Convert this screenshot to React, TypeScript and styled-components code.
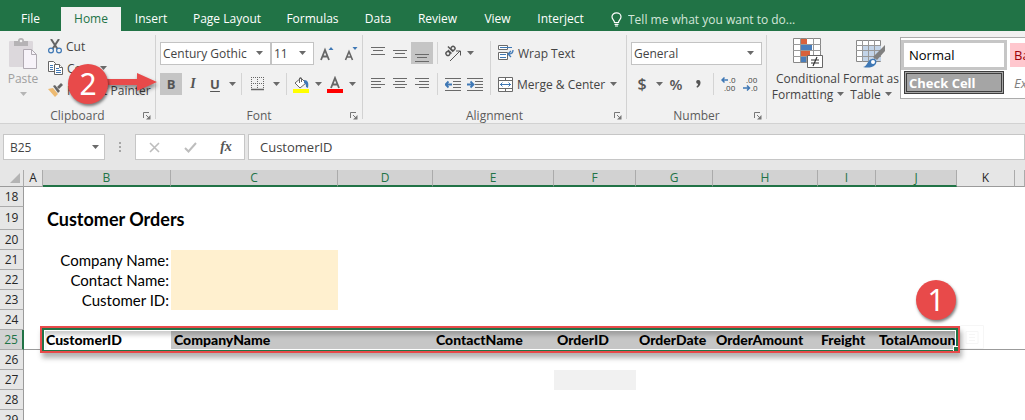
import React from "react";
import styled, { createGlobalStyle, css } from "styled-components";

const green = "#217346";
const ink = "#444444";
const iconGrey = "#6a6a6a";
const blue = "#3f78b5";
const red = "#e84a4a";

const GlobalStyle = createGlobalStyle`
  * { box-sizing: border-box; }
  body { margin: 0; background: #ffffff; }
  body, button, input, select { font-family: "Open Sans", "Noto Sans", sans-serif; font-size: 12px; color: ${ink}; }
  button { border: 0; padding: 0; background: none; white-space: nowrap; }
`;

const Page = styled.div`
  display: flex;
  flex-direction: column;
  height: 100vh;
  overflow: hidden;
`;

/* ---- tab strip ---- */

const TabStrip = styled.nav`
  display: flex;
  flex: none;
  height: 31px;
  padding-top: 7px;
  background: ${green};
`;

const Tab = styled.button<{ $width: number; $active?: boolean }>`
  flex: none;
  width: ${(p) => p.$width}px;
  height: 24px;
  line-height: 24px;
  color: ${(p) => (p.$active ? green : "#ffffff")};
  background: ${(p) => (p.$active ? "#f1f1f1" : "transparent")};
`;

const TellMe = styled.label`
  display: flex;
  align-items: center;
  gap: 6px;
  flex: 1;
  padding-left: 14px;
`;

const TellMeInput = styled.input`
  flex: 1;
  min-width: 0;
  border: 0;
  padding: 0;
  background: transparent;
  &::placeholder { color: #d3e6da; opacity: 1; }
`;

/* ---- ribbon ---- */

const Ribbon = styled.div`
  position: relative;
  display: flex;
  flex: none;
  height: 93px;
  padding-top: 4px;
  background: #f1f1f1;
  border-bottom: 1px solid #d2d2d2;
`;

const Group = styled.section<{ $width?: number }>`
  display: flex;
  flex-direction: column;
  flex: ${(p) => (p.$width ? "none" : "1")};
  width: ${(p) => (p.$width ? `${p.$width}px` : "auto")};
  min-width: 0;
  overflow: hidden;
`;

const GroupDivider = styled.div`
  flex: none;
  width: 1px;
  height: 84px;
  background: #d2d2d2;
`;

const GroupBody = styled.div`
  display: flex;
  height: 72px;
  padding-left: 4px;
`;

const GroupFooter = styled.div`
  display: grid;
  grid-template-columns: 16px 1fr 16px;
  align-items: center;
  height: 16px;
  line-height: 16px;
  text-align: center;
  color: #5c5c5c;
`;

const Rows = styled.div`
  display: flex;
  flex-direction: column;
  gap: 9px;
  padding-top: 7px;
`;

const Row = styled.div`
  display: flex;
  align-items: center;
  height: 22px;
`;

const Tool = styled.button<{ $pressed?: boolean; $width?: number }>`
  display: flex;
  align-items: center;
  justify-content: center;
  flex: none;
  width: ${(p) => p.$width ?? 22}px;
  height: 22px;
  background: ${(p) => (p.$pressed ? "#c5c5c5" : "transparent")};
`;

const Glyph = styled.span<{ $italic?: boolean; $underline?: boolean; $size?: number; $light?: boolean }>`
  color: #555555;
  font-size: ${(p) => p.$size ?? 13}px;
  font-weight: ${(p) => (p.$light ? 600 : 700)};
  font-style: ${(p) => (p.$italic ? "italic" : "normal")};
  font-family: ${(p) => (p.$italic ? '"Liberation Serif", serif' : "inherit")};
  text-decoration: ${(p) => (p.$underline ? "underline" : "none")};
  text-underline-offset: 2px;
`;

const Separator = styled.div<{ $tall?: boolean; $wide?: boolean }>`
  flex: none;
  width: 1px;
  height: ${(p) => (p.$tall ? 54 : 22)}px;
  margin: ${(p) => (p.$tall ? "6px 7px 0 4px" : p.$wide ? "0 4px" : "0 3px")};
  background: #d4d4d4;
`;

const LabelTool = styled.button`
  display: flex;
  align-items: center;
  gap: 4px;
  height: 22px;
`;

const Stack = styled.div`
  display: flex;
  flex-direction: column;
  align-items: flex-start;
  padding-left: 6px;
`;

const BigTool = styled.button<{ $width: number; $muted?: boolean }>`
  display: flex;
  flex-direction: column;
  align-items: center;
  flex: none;
  width: ${(p) => p.$width}px;
  padding-top: 3px;
  line-height: 16px;
  color: ${(p) => (p.$muted ? "#a0a0a0" : ink)};
  svg:first-child { margin-bottom: 2px; }
`;

const BigLine = styled.span`
  display: flex;
  align-items: center;
  justify-content: center;
  gap: 4px;
  height: 16px;
`;

const Combo = styled.div<{ $width: number }>`
  display: grid;
  grid-template-columns: 1fr 14px;
  align-items: center;
  flex: none;
  width: ${(p) => p.$width}px;
  height: 23px;
  background: #ffffff;
  border: 1px solid #c3c3c3;
  & > select { grid-area: 1 / 1 / 2 / 3; }
  & > svg { grid-area: 1 / 2; pointer-events: none; z-index: 1; }
`;

const ComboSelect = styled.select`
  appearance: none;
  width: 100%;
  height: 20px;
  padding: 0 0 0 2px;
  border: 0;
  background: transparent;
`;

const Gallery = styled.div`
  display: grid;
  grid-template-columns: 106px 106px;
  grid-template-rows: 30px 24px;
  gap: 1px;
  flex: 1;
  min-width: 0;
  height: 62px;
  margin: 2px 0 0 3px;
  padding-top: 2px;
  overflow: hidden;
  background: #ffffff;
  border: 1px solid #ababab;
  border-right: 0;
`;

const StyleCell = styled.button<{ $kind: "normal" | "bad" | "check" | "note" }>`
  padding-left: 5px;
  text-align: left;
  font-size: 13px;
  color: #000000;
  ${(p) => p.$kind === "normal" && css`border: 3px solid #c6c6c6; background: #ffffff;`}
  ${(p) => p.$kind === "bad" && css`margin: 3px 2px; padding-left: 4px; background: #ffc7ce; color: #9c0006;`}
  ${(p) => p.$kind === "check" && css`
    margin: 0 3px 1px;
    padding-left: 2px;
    border: 3px double #3f3f3f;
    background: #a5a5a5;
    color: #ffffff;
    font-weight: 700;
  `}
  ${(p) => p.$kind === "note" && css`margin: 0 2px; padding-left: 4px; color: #7f7f7f; font-style: italic;`}
`;

/* ---- formula bar ---- */

const FormulaBar = styled.div`
  display: flex;
  align-items: center;
  flex: none;
  height: 46px;
  padding-left: 3px;
  background: #e6e6e6;
`;

const BarBox = styled.div<{ $width?: number }>`
  display: flex;
  align-items: center;
  flex: ${(p) => (p.$width ? "none" : "1")};
  width: ${(p) => (p.$width ? `${p.$width}px` : "auto")};
  min-width: 0;
  height: 26px;
  margin-left: ${(p) => (p.$width ? 0 : 3)}px;
  background: #ffffff;
  border: 1px solid #c6c6c6;
`;

const BarInput = styled.input<{ $indent: number; $large?: boolean }>`
  flex: 1;
  min-width: 0;
  height: 22px;
  padding: 0 0 0 ${(p) => p.$indent}px;
  border: 0;
  background: transparent;
  font-size: ${(p) => (p.$large ? 13 : 12)}px;
`;

const BarTool = styled.button`
  display: flex;
  flex: 1;
  justify-content: center;
`;

const Grip = styled.div`
  display: flex;
  flex-direction: column;
  align-items: center;
  gap: 2px;
  width: 30px;
`;

const Dot = styled.i`
  width: 2px;
  height: 2px;
  background: #a6a6a6;
`;

/* ---- worksheet ---- */

const Sheet = styled.main`
  position: relative;
  flex: 1;
  min-height: 0;
  overflow: hidden;
  background: #ffffff;
`;

const Grid = styled.table`
  width: 100%;
  table-layout: fixed;
  border-collapse: separate;
  border-spacing: 0;
  color: #000000;
`;

const HeadRow = styled.tr`
  height: 17px;
`;

const ColHead = styled.th<{ $selected?: boolean }>`
  height: 17px;
  padding: 0;
  font-weight: 400;
  line-height: 14px;
  color: ${(p) => (p.$selected ? green : "#262626")};
  background: ${(p) => (p.$selected ? "#d2d2d2" : "#e6e6e6")};
  border-right: 1px solid #ababab;
  border-bottom: ${(p) => (p.$selected ? `2px solid ${green}` : "1px solid #9b9b9b")};
`;

const Corner = styled.th`
  height: 17px;
  padding: 0 3px 0 0;
  line-height: 0;
  text-align: right;
  background: #e6e6e6;
  border-right: 1px solid #ababab;
  border-bottom: 1px solid #9b9b9b;
`;

const SheetRow = styled.tr<{ $height: number }>`
  height: ${(p) => p.$height}px;
`;

const RowHead = styled.th<{ $selected?: boolean }>`
  padding: 0;
  font-weight: 400;
  line-height: 16px;
  color: ${(p) => (p.$selected ? green : "#262626")};
  background: ${(p) => (p.$selected ? "#d2d2d2" : "#e6e6e6")};
  border-right: ${(p) => (p.$selected ? `2px solid ${green}` : "1px solid #9b9b9b")};
  border-bottom: 1px solid #ababab;
`;

type CellKind = "plain" | "title" | "label" | "input" | "first" | "head" | "ruled" | "shade";

const Cell = styled.td<{ $kind: CellKind }>`
  padding: 0 2px 0 3px;
  overflow: ${(p) => (p.$kind === "title" ? "visible" : "hidden")};
  white-space: nowrap;
  line-height: 18px;
  font-family: Lato, sans-serif;
  font-size: 15px;
  ${(p) => p.$kind === "title" && css`font-size: 18px; font-weight: 700; padding-left: 4px;`}
  ${(p) => p.$kind === "label" && css`text-align: right;`}
  ${(p) => p.$kind === "input" && css`background: #fff0cf;`}
  ${(p) => p.$kind === "shade" && css`background: #f1f1f1;`}
  ${(p) => (p.$kind === "first" || p.$kind === "head") && css`font-weight: 900; font-size: 14px;`}
  ${(p) => p.$kind === "head" && css`background: #c6c6c6;`}
  ${(p) => (p.$kind === "first" || p.$kind === "head" || p.$kind === "ruled") && css`border-bottom: 1px solid #9b9b9b;`}
`;

/* ---- callouts lying over the window ---- */

const Highlight = styled.div`
  position: absolute;
  top: 156px;
  left: 40px;
  width: 920px;
  height: 27px;
  border: 2px solid ${red};
  box-shadow: 2px 5px 5px rgba(0, 0, 0, 0.3);
  pointer-events: none;
`;

const Selection = styled.div`
  height: 23px;
  border: 2px solid ${green};
  border-bottom-width: 1px;
  box-shadow: inset 0 0 0 1px #ffffff, inset 0 5px 4px rgba(0, 0, 0, 0.2);
`;

const FillHandle = styled.div`
  position: absolute;
  right: 0;
  bottom: 0;
  width: 5px;
  height: 5px;
  background: ${green};
  border: solid #ffffff;
  border-width: 1px 0 0 1px;
`;

const Badge = styled.div<{ $left: number; $top: number }>`
  position: absolute;
  left: ${(p) => p.$left}px;
  top: ${(p) => p.$top}px;
  width: 40px;
  height: 40px;
  border-radius: 50%;
  background: ${red};
  box-shadow: 1px 2px 3px rgba(0, 0, 0, 0.5);
  color: #ffffff;
  font-family: "Noto Sans", sans-serif;
  font-size: 30px;
  line-height: 40px;
  text-align: center;
`;

const ArrowLayer = styled.svg`
  position: absolute;
  left: 104px;
  top: 38px;
  filter: drop-shadow(1px 3px 2px rgba(0, 0, 0, 0.45));
  pointer-events: none;
`;

const QuickAnalysis = styled.svg`
  position: absolute;
  left: 960px;
  top: 155px;
`;

/* ---- icons ---- */

const Caret = ({ color = iconGrey }: { color?: string }) => (
  <svg width="7" height="4" viewBox="0 0 7 4"><path d="M0 0h7L3.5 4z" fill={color} /></svg>
);

const Launcher = () => (
  <svg width="8" height="8" viewBox="0 0 8 8" fill="none" stroke="#777">
    <path d="M.5 6V.5H6M3 3l3.500 3.500" /><path d="M7.500 3v4.500H3z" fill="#777" stroke="none" />
  </svg>
);

const Bulb = () => (
  <svg width="11" height="15" viewBox="0 0 11 15" fill="none" stroke="#fff" strokeWidth="1.200">
    <path d="M3.500 10.500C3.500 8 1 7.500 1 4.800 1 2.500 3 .8 5.500.8S10 2.500 10 4.800C10 7.500 7.500 8 7.500 10.500zM3.500 12.300h4M4 14h3" />
  </svg>
);

const PasteIcon = () => (
  <svg width="28" height="31" viewBox="0 0 28 31">
    <rect x="0" y="3" width="24" height="26" rx="1" fill="#dcd8dc" />
    <path d="M5 3h4a3 3 0 0 1 6 0h4v5H5z" fill="#b5b3b5" /><circle cx="12" cy="3" r="1.300" fill="#f1f1f1" />
    <path d="M14.500 11.500h8l5 5v14h-13z" fill="#f7f3f9" stroke="#b0aab2" />
    <path d="M22.500 11.500v5h5" fill="none" stroke="#b0aab2" />
  </svg>
);

const CutIcon = () => (
  <svg width="14" height="15" viewBox="0 0 14 15" fill="none">
    <path d="M3 0l6.500 10M11 0L4.500 10" stroke="#666" strokeWidth="2" />
    <circle cx="3" cy="11.500" r="2.400" stroke={blue} strokeWidth="1.200" /><circle cx="11" cy="11.500" r="2.400" stroke={blue} strokeWidth="1.200" />
  </svg>
);

const CopyIcon = () => (
  <svg width="15" height="14" viewBox="0 0 15 14" fill="#fff" stroke="#666">
    <path d="M.5.500h5l2 2v8h-7z" /><path d="M2 4.500h3M2 6.500h3M2 8.500h3" stroke={blue} />
    <path d="M6.500 3.500h5l3 3v7h-8z" /><path d="M11.500 3.500v3h3" /><path d="M8 7.500h3M8 9.500h5M8 11.500h5" stroke={blue} />
  </svg>
);

const BrushIcon = () => (
  <svg width="15" height="14" viewBox="0 0 15 14">
    <path d="M0 6l5-1 5 6-3 3z" fill="#edba72" /><path d="M5 3l2-1 5 6-2 2z" fill="#666" /><path d="M9 4l4-4 2 2-4 4z" fill="#666" />
  </svg>
);

const GrowFont = ({ down }: { down?: boolean }) => (
  <svg width="14" height="15" viewBox="0 0 14 15" fill="none">
    {down ? <path d="M1.500 14L5 5.500 8.500 14M3 11h4" stroke="#666" strokeWidth="1.600" /> : <path d="M1 14L5 4l4 10M2.500 10.500h5" stroke="#666" strokeWidth="1.800" />}
    <path d={down ? "M8.500 1h5L11 4z" : "M8.500 4h5L11 1z"} fill={blue} />
  </svg>
);

const BordersIcon = () => (
  <svg width="13" height="14" viewBox="0 0 13 14" stroke="#666">
    <path d="M.5 0v12M6.500 0v12M12.500 0v12M0 .5h13M0 6.500h13" strokeDasharray="1 1" /><path d="M0 12.500h13" strokeWidth="1.500" />
  </svg>
);

const FillIcon = () => (
  <svg width="16" height="17" viewBox="0 0 16 17" fill="none">
    <path d="M2 7l6-5 5 5-6 5z" fill="#fff" stroke="#666" /><path d="M6.500 7V2a1.500 1.500 0 0 1 2 0v4" stroke="#666" />
    <path d="M11 4c4 0 5 3 4 8l-2-1c0-2 0-3-2-4z" fill={blue} /><path d="M0 13h16v4H0z" fill="#ff0" />
  </svg>
);

const FontColorIcon = () => (
  <svg width="16" height="17" viewBox="0 0 16 17" fill="none">
    <path d="M4 12L8 2l4 10M5.500 8.500h5" stroke="#666" strokeWidth="1.800" /><path d="M0 13h16v4H0z" fill="red" />
  </svg>
);

const VAlign = ({ y }: { y: number }) => (
  <svg width="14" height="18" viewBox="0 0 14 18" stroke={iconGrey}><path d={`M0 ${y}.5h14M2 ${y + 3}.5h10M0 ${y + 7}.5h14`} /></svg>
);

const HAlign = ({ side }: { side: "left" | "center" | "right" }) => {
  const x = { left: 0, center: 2, right: 4 }[side];
  return (
    <svg width="14" height="12" viewBox="0 0 14 12" stroke={iconGrey}>
      <path d={`M0 .5h14M${x} 3.500h10M0 6.500h14M${x} 9.500h10`} />
    </svg>
  );
};

const OrientationIcon = () => (
  <svg width="18" height="18" viewBox="0 0 18 18" fill="none" stroke="#555">
    <path d="M6 17L16 7M12 7h4.500v4.500" />
    <g transform="translate(5 7) rotate(-45)" strokeWidth="1.400">
      <circle cx="-2.500" cy="1" r="2" /><path d="M0-1.500V3.500" /><path d="M2.500-4V3.500" /><circle cx="4.700" cy="1" r="2" />
    </g>
  </svg>
);

const IndentIcon = ({ right }: { right?: boolean }) => (
  <svg width="16" height="13" viewBox="0 0 16 13" fill="none" stroke={iconGrey}>
    <path d="M0 .5h16M8 3.500h8M8 6.500h8M8 9.500h8M0 12.500h16" />
    <path d={right ? "M0 6.500h6M3.500 3.500l3 3-3 3" : "M7 6.500H1M3.500 3.500l-3 3 3 3"} stroke={blue} strokeWidth="1.800" />
  </svg>
);

const WrapIcon = () => (
  <svg width="16" height="16" viewBox="0 0 16 16" fill="none" stroke={iconGrey}>
    <path d="M.5.500h9v4h-9zM.5 7.500h9v7h-9z" fill="#fff" /><path d="M2 2.500h12M2 9.500h6M2 12.500h6" stroke={blue} />
    <path d="M15 5c0 3-1 4-4 4M13 6l-3 3 3 3" stroke={blue} strokeWidth="1.300" />
  </svg>
);

const MergeIcon = () => (
  <svg width="15" height="15" viewBox="0 0 15 15" fill="#fff" stroke={iconGrey}>
    <path d="M.5.500h14v14H.5zM.5 3.500h14M.5 11.500h14M7.500 0v3.500M7.500 11.500V15" /><path d="M2 7.500h11M4.500 5.500l-2 2 2 2M10.500 5.500l2 2-2 2" fill="none" stroke={blue} />
  </svg>
);

const CommaIcon = () => (
  <svg width="5" height="8" viewBox="0 0 5 8"><path d="M2.300 0A2 2 0 0 0 2 4c0 1-.6 2-1.600 2.700l.8 1C3.500 6.500 4.600 4.500 4.500 2.400A2.300 2.300 0 0 0 2.300 0z" fill="#555" /></svg>
);

const DecimalIcon = ({ fewer }: { fewer?: boolean }) => (
  <svg width="16" height="16" viewBox="0 0 16 16" fontSize="8" fill="#444">
    <text x={fewer ? 3 : 8} y="7">{fewer ? ".00" : ".0"}</text>
    <text x={fewer ? 8 : 3} y="15">{fewer ? ".0" : ".00"}</text>
    <path d={fewer ? "M0 12h6M4 9.500L6.500 12 4 14.500" : "M7 4H1M3.500 1.500L1 4l2.500 2.500"} fill="none" stroke={blue} strokeWidth="1.500" />
  </svg>
);

const ConditionalIcon = () => (
  <svg width="30" height="31" viewBox="0 0 30 31">
    <path d="M.5.500h27v24H.5z" fill="#fff" stroke="#888" />
    <path d="M7.500 0v25M13.500 0v25M20.500 0v25M0 6.500h28M0 12.500h28M0 18.500h28" stroke="#999" />
    <path d="M8 1h6v5H8zM8 13h9v5H8z" fill="#d9623b" /><path d="M8 7h11v5H8zM8 19h5v5H8z" fill="#4a7ebb" />
    <path d="M14.500 17.500h15v12h-15z" fill="#fff" stroke="#666" /><path d="M18 22h8M18 25h8M24 19l-4 9" stroke="#333" strokeWidth="1.200" />
  </svg>
);

const TableIcon = () => (
  <svg width="30" height="31" viewBox="0 0 30 31">
    <path d="M.5 2.500h24v21H.5z" fill="#fff" stroke="#888" /><path d="M7 8h18v15H7z" fill="#c3d4e8" />
    <path d="M6.500 2v22M12.500 2v22M18.500 2v22M0 7.500h25M0 12.500h25M0 18.500h25" stroke="#999" />
    <path d="M29 7v6l-8 9-4-3z" fill="#808080" /><path d="M16 21c4-1 6 3 3 6-3 3-8 3-12 2 5-1 4-7 9-8z" fill={blue} /><circle cx="17" cy="24" r="2" fill="#fff" />
  </svg>
);

/* ---- data ---- */

const tabs: [string, number][] = [
  ["File", 61], ["Home", 60], ["Insert", 60], ["Page Layout", 92], ["Formulas", 79],
  ["Data", 52], ["Review", 67], ["View", 53], ["Interject", 73],
];

const columns: [string, number | undefined][] = [
  ["A", 19], ["B", 128], ["C", 167], ["D", 95], ["E", 121], ["F", 82],
  ["G", 77], ["H", 105], ["I", 58], ["J", 81], ["K", 58], ["", undefined],
];

const content: Record<string, [string, CellKind]> = {
  B19: ["Customer Orders", "title"],
  B21: ["Company Name:", "label"],
  B22: ["Contact Name:", "label"],
  B23: ["Customer ID:", "label"],
  C21: ["", "input"],
  C22: ["", "input"],
  C23: ["", "input"],
  A25: ["", "ruled"],
  B25: ["CustomerID", "first"],
  C25: ["CompanyName", "head"],
  D25: ["", "head"],
  E25: ["ContactName", "head"],
  F25: ["OrderID", "head"],
  G25: ["OrderDate", "head"],
  H25: ["OrderAmount", "head"],
  I25: ["Freight", "head"],
  J25: ["TotalAmount", "head"],
  K25: ["", "ruled"],
  "25": ["", "ruled"],
  F27: ["", "shade"],
};

const rowNumbers = [18, 19, 20, 21, 22, 23, 24, 25, 26, 27, 28, 29];
const isSelected = (name: string) => name >= "B" && name <= "J";

const Footer = ({ label }: { label: string }) => (
  <GroupFooter>
    <span />
    <span>{label}</span>
    <button aria-label={`${label} settings`}><Launcher /></button>
  </GroupFooter>
);

const ComboBox = ({ label, value, width }: { label: string; value: string; width: number }) => (
  <Combo $width={width}>
    <ComboSelect aria-label={label} defaultValue={value}><option>{value}</option></ComboSelect>
    <Caret />
  </Combo>
);

export default function App() {
  return (
    <Page>
      <GlobalStyle />
      <TabStrip>
        {tabs.map(([name, width]) => (
          <Tab key={name} $width={width} $active={name === "Home"}>{name}</Tab>
        ))}
        <TellMe>
          <Bulb />
          <TellMeInput aria-label="Tell me" placeholder="Tell me what you want to do..." />
        </TellMe>
      </TabStrip>

      <Ribbon>
        <Group $width={155}>
          <GroupBody>
            <BigTool $width={38} $muted>
              <PasteIcon />
              <BigLine>Paste</BigLine>
              <BigLine><Caret color="#b5b5b5" /></BigLine>
            </BigTool>
            <Stack>
              <LabelTool><CutIcon />Cut</LabelTool>
              <Row>
                <LabelTool><CopyIcon />Copy</LabelTool>
                <Tool aria-label="Copy options" $width={16}><Caret /></Tool>
              </Row>
              <LabelTool><BrushIcon />Format Painter</LabelTool>
            </Stack>
          </GroupBody>
          <Footer label="Clipboard" />
        </Group>
        <GroupDivider />

        <Group $width={206}>
          <GroupBody>
            <Rows>
              <Row>
                <ComboBox label="Font" value="Century Gothic" width={111} />
                <ComboBox label="Font size" value="11" width={43} />
                <Tool aria-label="Increase font size" $width={26}><GrowFont /></Tool>
                <Tool aria-label="Decrease font size"><GrowFont down /></Tool>
              </Row>
              <Row>
                <Tool $pressed><Glyph>B</Glyph></Tool>
                <Tool><Glyph $italic $size={14}>I</Glyph></Tool>
                <Tool><Glyph $underline>U</Glyph></Tool>
                <Tool aria-label="Underline options" $width={12}><Caret /></Tool>
                <Separator />
                <Tool aria-label="Borders" $width={24}><BordersIcon /></Tool>
                <Tool aria-label="Border options" $width={14}><Caret /></Tool>
                <Separator />
                <Tool aria-label="Fill colour"><FillIcon /></Tool>
                <Tool aria-label="Fill options" $width={12}><Caret /></Tool>
                <Tool aria-label="Font colour"><FontColorIcon /></Tool>
                <Tool aria-label="Font colour options" $width={12}><Caret /></Tool>
              </Row>
            </Rows>
          </GroupBody>
          <Footer label="Font" />
        </Group>
        <GroupDivider />

        <Group $width={263}>
          <GroupBody>
            <Rows>
              <Row>
                <Tool aria-label="Top align"><VAlign y={3} /></Tool>
                <Tool aria-label="Middle align"><VAlign y={6} /></Tool>
                <Tool aria-label="Bottom align" $pressed><VAlign y={10} /></Tool>
                <Separator $wide />
                <Tool aria-label="Orientation"><OrientationIcon /></Tool>
                <Tool aria-label="Orientation options" $width={12}><Caret /></Tool>
              </Row>
              <Row>
                <Tool aria-label="Align left"><HAlign side="left" /></Tool>
                <Tool aria-label="Center"><HAlign side="center" /></Tool>
                <Tool aria-label="Align right"><HAlign side="right" /></Tool>
                <Separator $wide />
                <Tool aria-label="Decrease indent"><IndentIcon /></Tool>
                <Tool aria-label="Increase indent"><IndentIcon right /></Tool>
              </Row>
            </Rows>
            <Separator $tall />
            <Rows>
              <Row><LabelTool><WrapIcon />Wrap Text</LabelTool></Row>
              <Row>
                <LabelTool><MergeIcon />Merge &amp; Center</LabelTool>
                <Tool aria-label="Merge options" $width={16}><Caret /></Tool>
              </Row>
            </Rows>
          </GroupBody>
          <Footer label="Alignment" />
        </Group>
        <GroupDivider />

        <Group $width={139}>
          <GroupBody>
            <Rows>
              <Row><ComboBox label="Number format" value="General" width={131} /></Row>
              <Row>
                <Tool><Glyph $light $size={16}>$</Glyph></Tool>
                <Tool aria-label="Currency options" $width={12}><Caret /></Tool>
                <Tool><Glyph $light $size={15}>%</Glyph></Tool>
                <Tool aria-label="Comma style"><CommaIcon /></Tool>
                <Separator $wide />
                <Tool aria-label="Increase decimal"><DecimalIcon /></Tool>
                <Tool aria-label="Decrease decimal"><DecimalIcon fewer /></Tool>
              </Row>
            </Rows>
          </GroupBody>
          <Footer label="Number" />
        </Group>
        <GroupDivider />

        <Group>
          <GroupBody>
            <BigTool $width={74}>
              <ConditionalIcon />
              <BigLine>Conditional</BigLine>
              <BigLine>Formatting<Caret /></BigLine>
            </BigTool>
            <BigTool $width={52}>
              <TableIcon />
              <BigLine>Format as</BigLine>
              <BigLine>Table<Caret /></BigLine>
            </BigTool>
            <Gallery>
              <StyleCell $kind="normal">Normal</StyleCell>
              <StyleCell $kind="bad">Bad</StyleCell>
              <StyleCell $kind="check">Check Cell</StyleCell>
              <StyleCell $kind="note">Explanatory</StyleCell>
            </Gallery>
          </GroupBody>
        </Group>

        <ArrowLayer width="56" height="28" viewBox="0 0 56 28">
          <path d="M0 10h33V4l20 9-20 9v-6H0z" fill={red} />
        </ArrowLayer>
        <Badge $left={68} $top={33}>2</Badge>
      </Ribbon>

      <FormulaBar>
        <BarBox $width={102}>
          <BarInput aria-label="Name box" defaultValue="B25" $indent={6} />
          <Tool aria-label="Names" $width={18}><Caret /></Tool>
        </BarBox>
        <Grip><Dot /><Dot /><Dot /></Grip>
        <BarBox $width={110}>
          <BarTool aria-label="Cancel">
            <svg width="11" height="11" viewBox="0 0 11 11"><path d="M1 1l9 9M10 1l-9 9" stroke="#bdbdbd" strokeWidth="1.600" /></svg>
          </BarTool>
          <BarTool aria-label="Enter">
            <svg width="13" height="11" viewBox="0 0 13 11"><path d="M1 6l3.500 3.500L12 1" fill="none" stroke="#bdbdbd" strokeWidth="2" /></svg>
          </BarTool>
          <BarTool aria-label="Insert function"><Glyph $italic $size={14}>fx</Glyph></BarTool>
        </BarBox>
        <BarBox>
          <BarInput aria-label="Formula" defaultValue="CustomerID" $indent={11} $large />
        </BarBox>
      </FormulaBar>

      <Sheet>
        <Grid>
          <colgroup>
            <col width={24} />
            {columns.map(([, width], i) => <col key={i} width={width} />)}
          </colgroup>
          <thead>
            <HeadRow>
              <Corner><svg width="10" height="10" viewBox="0 0 10 10"><path d="M10 0v10H0z" fill="#b4b4b4" /></svg></Corner>
              {columns.map(([name], i) => <ColHead key={i} scope="col" $selected={isSelected(name)}>{name}</ColHead>)}
            </HeadRow>
          </thead>
          <tbody>
            {rowNumbers.map((n) => (
              <SheetRow key={n} $height={n === 19 ? 23 : 20}>
                <RowHead scope="row" $selected={n === 25}>{n}</RowHead>
                {columns.map(([name], i) => {
                  const [text, kind] = content[`${name}${n}`] ?? ["", "plain"];
                  return <Cell key={i} $kind={kind}>{text}</Cell>;
                })}
              </SheetRow>
            ))}
          </tbody>
        </Grid>
        <QuickAnalysis width="24" height="24" viewBox="0 0 24 24" fill="none" stroke="#f6f6f6">
          <path d="M.5.500h23v23H.5zM6 6.500h12v12H6zM9 9.500h6M9 12.500h6M9 15.500h6" />
        </QuickAnalysis>
        <Highlight>
          <Selection />
          <FillHandle />
        </Highlight>
        <Badge $left={916} $top={110}>1</Badge>
      </Sheet>
    </Page>
  );
}
